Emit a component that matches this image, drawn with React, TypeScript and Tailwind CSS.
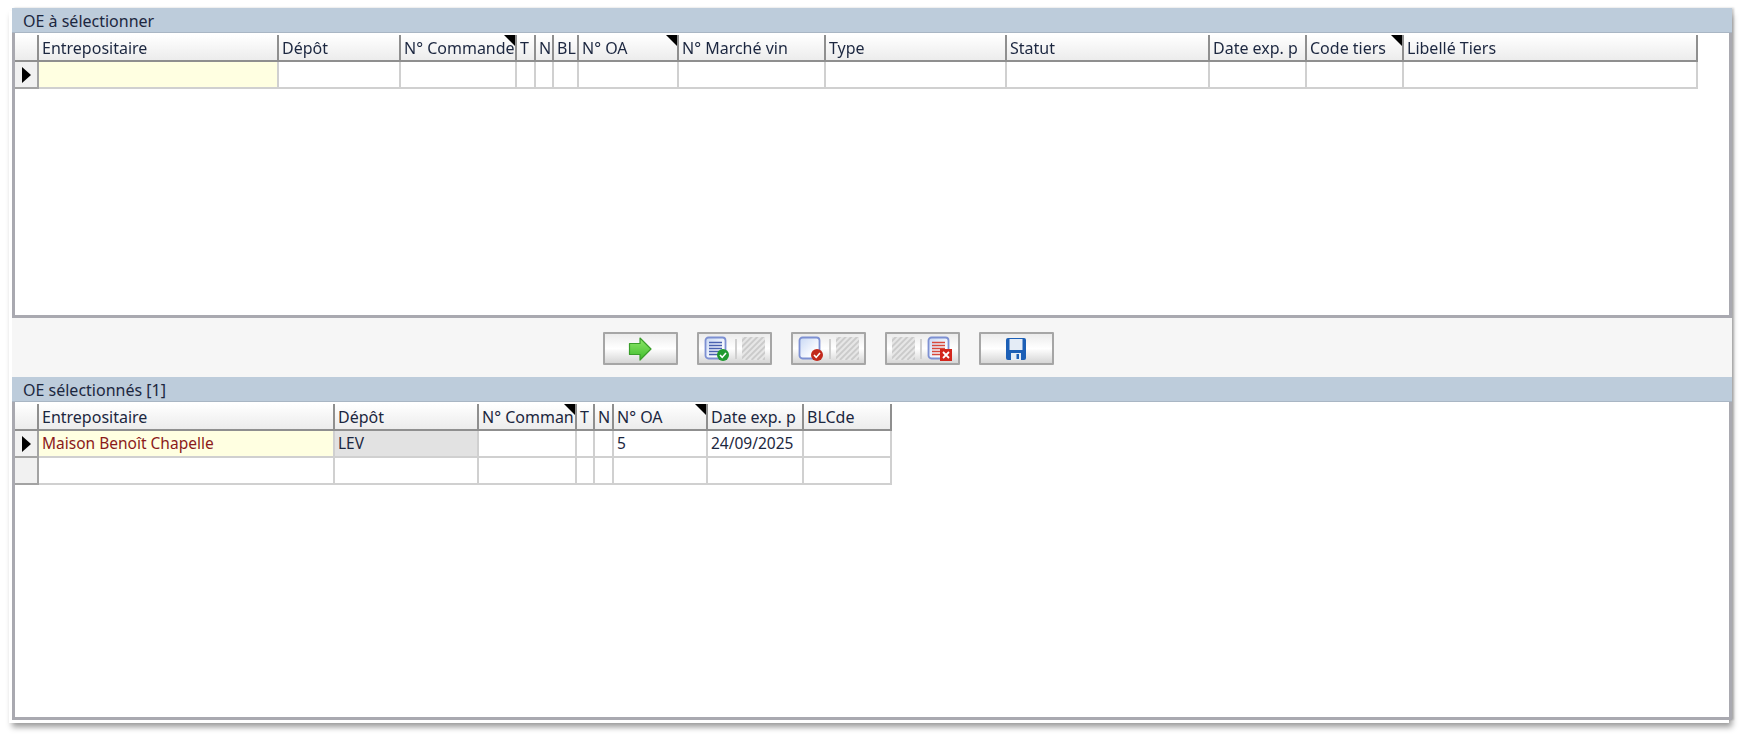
const font = "font-['Noto_Sans','Liberation_Sans',sans-serif]"

type Col = { label: string; w: string; corner?: boolean }

const topCols: Col[] = [
  { label: 'Entrepositaire', w: 'w-[240px]' },
  { label: 'Dépôt', w: 'w-[122px]' },
  { label: 'N° Commande', w: 'w-[116px]', corner: true },
  { label: 'T', w: 'w-[19px]' },
  { label: 'N', w: 'w-[18px]' },
  { label: 'BL', w: 'w-[25px]' },
  { label: 'N° OA', w: 'w-[100px]', corner: true },
  { label: 'N° Marché vin', w: 'w-[147px]' },
  { label: 'Type', w: 'w-[181px]' },
  { label: 'Statut', w: 'w-[203px]' },
  { label: 'Date exp. p', w: 'w-[97px]' },
  { label: 'Code tiers', w: 'w-[97px]', corner: true },
  { label: 'Libellé Tiers', w: 'w-[294px]' },
]

const bottomCols: Col[] = [
  { label: 'Entrepositaire', w: 'w-[296px]' },
  { label: 'Dépôt', w: 'w-[144px]' },
  { label: 'N° Comman', w: 'w-[98px]', corner: true },
  { label: 'T', w: 'w-[18px]' },
  { label: 'N', w: 'w-[19px]' },
  { label: 'N° OA', w: 'w-[94px]', corner: true },
  { label: 'Date exp. p', w: 'w-[96px]' },
  { label: 'BLCde', w: 'w-[88px]' },
]

function HeaderRow({ cols }: { cols: Col[] }) {
  return (
    <div className="flex h-[27px]">
      <div className="w-[24px] h-full bg-gradient-to-b from-white to-[#ececec] border-b-2 border-r-2 border-[#8f8f8f]" />
      {cols.map((c) => (
        <div
          key={c.label}
          className={`${c.w} relative h-full overflow-hidden whitespace-nowrap pl-[3px] pt-[1px] text-[16px] leading-[25px] text-[#1c2740] bg-gradient-to-b from-white to-[#ececec] border-b-2 border-r-2 border-[#8f8f8f]`}
        >
          {c.label}
          {c.corner && (
            <span className="absolute right-0 top-0 w-0 h-0 border-l-[11px] border-l-transparent border-t-[11px] border-t-black" />
          )}
        </div>
      ))}
    </div>
  )
}

type Cell = { text?: string; cls?: string }

function DataRow({ cols, marker, cells = [] }: { cols: Col[]; marker?: boolean; cells?: Cell[] }) {
  return (
    <div className="flex h-[27px]">
      <div className="w-[24px] h-full flex items-center pl-[7px] bg-[#f1f1f1] border-b-2 border-r-2 border-[#a3a3a3]">
        {marker && (
          <span className="w-0 h-0 border-l-[9px] border-l-black border-y-[8px] border-y-transparent" />
        )}
      </div>
      {cols.map((c, i) => (
        <div
          key={c.label}
          className={`${c.w} h-full overflow-hidden whitespace-nowrap pl-[3px] text-[15.5px] leading-[25px] border-b-2 border-r-2 border-[#d0d0d0] ${cells[i]?.cls ?? 'bg-white text-[#1c2740]'}`}
        >
          {cells[i]?.text}
        </div>
      ))}
    </div>
  )
}

function Panel({ title, className, children }: { title: string; className: string; children: React.ReactNode }) {
  return (
    <section className={`flex flex-col ${className}`}>
      <h2 className="h-[25px] shrink-0 bg-[#bdccdb] border-b border-[#a9b6c4] pl-[11px] text-[16px] leading-[26px] font-normal text-[#1c2740]">
        {title}
      </h2>
      <div className="flex-1 bg-white pt-[2px] border-l-[3px] border-r-[3px] border-b-[3px] border-[#a9a9b0]">
        {children}
      </div>
    </section>
  )
}

function Hatch() {
  return (
    <svg width="23" height="23" viewBox="0 0 24 24">
      <rect width="24" height="24" fill="#e6e6e6" />
      <path
        d="M-2 6L6-2M-2 12L12-2M-2 18L18-2M-2 24L24-2M4 24L26 2M10 24L26 8M16 24L26 14M22 24L26 20"
        stroke="#cbcbcb"
        strokeWidth="2"
      />
    </svg>
  )
}

function DocIcon({ id, lines, lineColor = '#4a62b0', children }: { id: string; lines?: boolean; lineColor?: string; children?: React.ReactNode }) {
  return (
    <svg width="26" height="26" viewBox="0 0 26 26">
      <defs>
        <linearGradient id={id} x1="0" y1="0" x2="1" y2="1">
          <stop offset="0" stopColor="#c8d8f4" />
          <stop offset="0.7" stopColor="#fbfcff" />
        </linearGradient>
      </defs>
      <rect x="1.5" y="1.5" width="20" height="21" rx="3" fill={`url(#${id})`} stroke="#7d90d2" strokeWidth="1.8" />
      {lines && (
        <path d="M5 6.5h13M5 9.5h13M5 12.5h13M5 15.5h13M5 18.5h9" stroke={lineColor} strokeWidth="1.6" />
      )}
      {children}
    </svg>
  )
}

function Btn({ children }: { children: React.ReactNode }) {
  return (
    <button className="w-[75px] h-[33px] flex items-center justify-center gap-[5px] border-2 border-[#a6a6a6] rounded-[1px] bg-gradient-to-b from-[#ececec] via-white to-[#d6d6d6]">
      {children}
    </button>
  )
}

function Sep() {
  return <span className="w-[2px] h-[20px] bg-[#cfcfcf]" />
}

export default function App() {
  return (
    <div className={`${font} w-[1744px] h-[735px] bg-white pt-[8px] pl-[12px] overflow-hidden`}>
      <div className="w-[1720px] h-[712px] flex flex-col bg-[#f6f6f6] shadow-[-3px_3px_0_#fff,0_7px_6px_rgba(0,0,0,0.4),2px_0_2px_rgba(0,0,0,0.2)] blur-[0.4px]">
        <Panel title="OE à sélectionner" className="h-[310px]">
          <HeaderRow cols={topCols} />
          <DataRow
            cols={topCols}
            marker
            cells={[{ cls: 'bg-[#ffffe1]' }]}
          />
        </Panel>

        <div className="h-[59px] flex items-start justify-center gap-[19px] pt-[14px] pr-[88px]">
          <Btn>
            <svg width="24" height="24" viewBox="0 0 24 24">
              <defs>
                <linearGradient id="arrow" x1="0" y1="0" x2="0" y2="1">
                  <stop offset="0" stopColor="#8fe86a" />
                  <stop offset="1" stopColor="#3fbc2c" />
                </linearGradient>
              </defs>
              <path d="M1.500 6.500h10.500V1L23 12 12 23v-5.500H1.500z" fill="url(#arrow)" stroke="#3a9e2a" strokeWidth="1.2" strokeLinejoin="round" />
            </svg>
          </Btn>
          <Btn>
            <DocIcon id="docA" lines>
              <circle cx="19" cy="19" r="6" fill="#1f9a2e" />
              <path d="M16 19l2.200 2.400L22 17" fill="none" stroke="#fff" strokeWidth="1.6" />
            </DocIcon>
            <Sep />
            <Hatch />
          </Btn>
          <Btn>
            <DocIcon id="docB">
              <circle cx="19" cy="19" r="6" fill="#c2281c" />
              <path d="M16 19l2.200 2.400L22 17" fill="none" stroke="#fff" strokeWidth="1.6" />
            </DocIcon>
            <Sep />
            <Hatch />
          </Btn>
          <Btn>
            <Hatch />
            <Sep />
            <DocIcon id="docC" lines lineColor="#d8483c">
              <rect x="13" y="13" width="12" height="12" fill="#d3261c" />
              <path d="M16 16l6 6M22 16l-6 6" stroke="#fff" strokeWidth="1.8" />
            </DocIcon>
          </Btn>
          <Btn>
            <svg width="24" height="24" viewBox="0 0 24 24">
              <path d="M2 3a2 2 0 0 1 2-2h16a2 2 0 0 1 2 2v18a2 2 0 0 1-2 2H4a2 2 0 0 1-2-2z" fill="#1c5fb6" />
              <rect x="5.500" y="2" width="13" height="11" fill="#e4ecf6" />
              <rect x="7" y="16" width="10" height="7" fill="#e4ecf6" />
              <rect x="12.500" y="17" width="2.500" height="5" fill="#1c5fb6" />
            </svg>
          </Btn>
        </div>

        <Panel title="OE sélectionnés [1]" className="flex-1">
          <HeaderRow cols={bottomCols} />
          <DataRow
            cols={bottomCols}
            marker
            cells={[
              { text: 'Maison Benoît Chapelle', cls: 'bg-[#ffffe1] text-[#8b1a1a]' },
              { text: 'LEV', cls: 'bg-[#e2e2e2] text-[#1c2740]' },
              {},
              {},
              {},
              { text: '5' },
              { text: '24/09/2025' },
            ]}
          />
          <DataRow cols={bottomCols} />
        </Panel>
      </div>
    </div>
  )
}
